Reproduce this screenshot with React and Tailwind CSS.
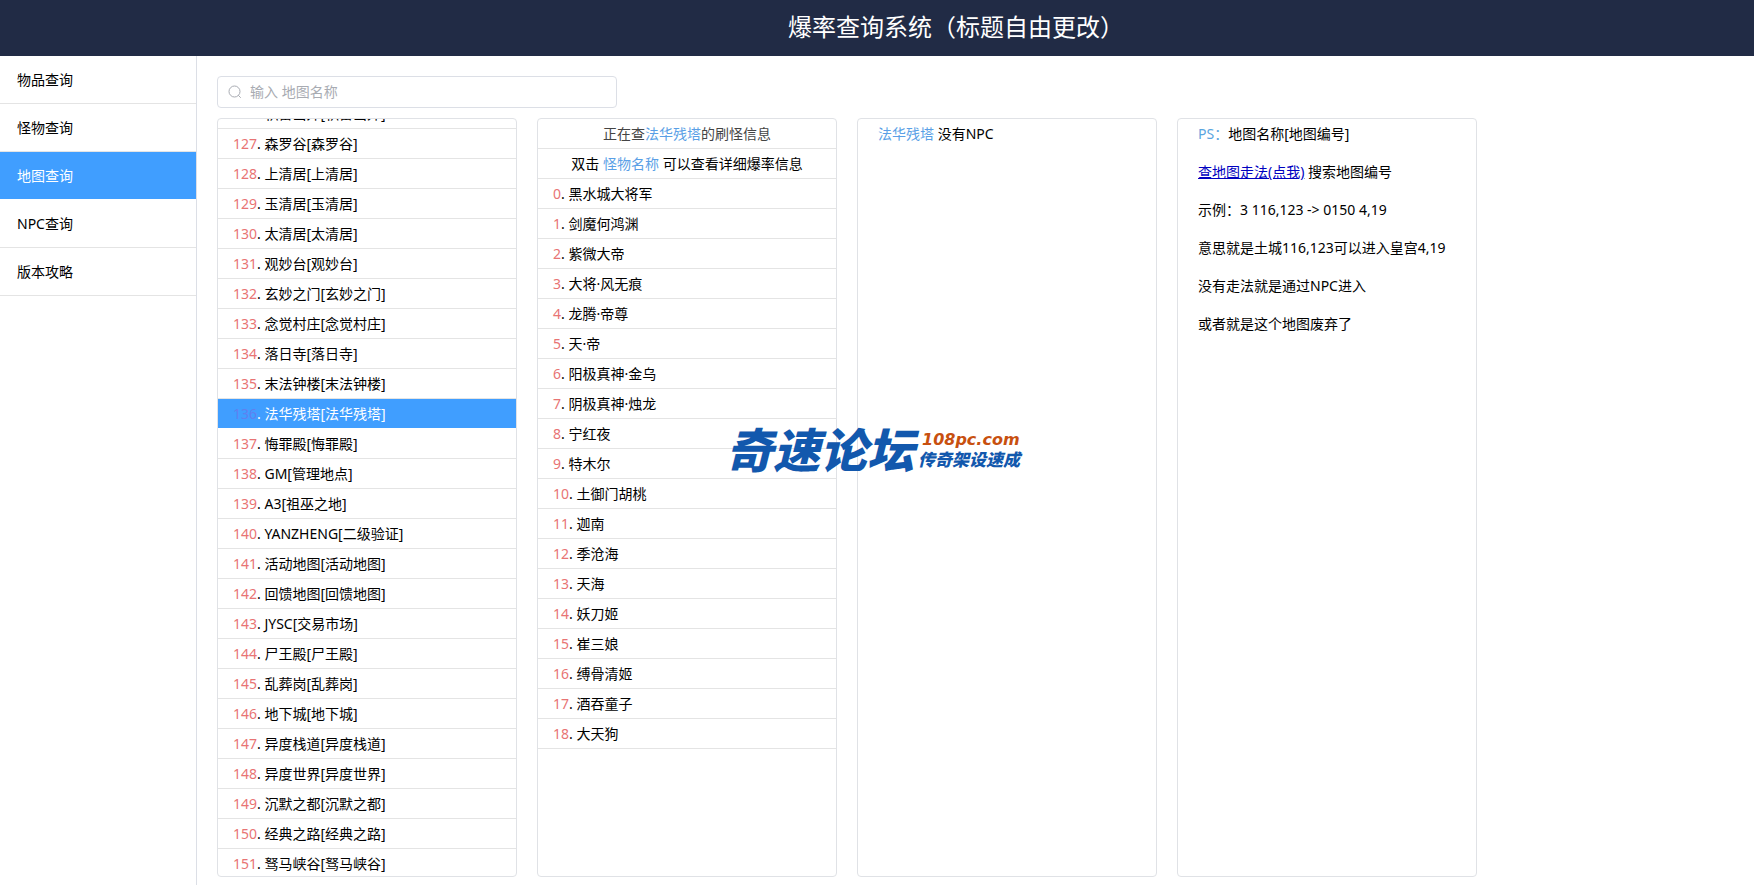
import React, { useLayoutEffect, useRef, useState } from 'react';

const menu = ['物品查询', '怪物查询', '地图查询', 'NPC查询', '版本攻略'];

const maps = [
  { id: 126, code: '积雷山外', name: '积雷山外' },
  { id: 127, code: '森罗谷', name: '森罗谷' },
  { id: 128, code: '上清居', name: '上清居' },
  { id: 129, code: '玉清居', name: '玉清居' },
  { id: 130, code: '太清居', name: '太清居' },
  { id: 131, code: '观妙台', name: '观妙台' },
  { id: 132, code: '玄妙之门', name: '玄妙之门' },
  { id: 133, code: '念觉村庄', name: '念觉村庄' },
  { id: 134, code: '落日寺', name: '落日寺' },
  { id: 135, code: '末法钟楼', name: '末法钟楼' },
  { id: 136, code: '法华残塔', name: '法华残塔' },
  { id: 137, code: '悔罪殿', name: '悔罪殿' },
  { id: 138, code: 'GM', name: '管理地点' },
  { id: 139, code: 'A3', name: '祖巫之地' },
  { id: 140, code: 'YANZHENG', name: '二级验证' },
  { id: 141, code: '活动地图', name: '活动地图' },
  { id: 142, code: '回馈地图', name: '回馈地图' },
  { id: 143, code: 'JYSC', name: '交易市场' },
  { id: 144, code: '尸王殿', name: '尸王殿' },
  { id: 145, code: '乱葬岗', name: '乱葬岗' },
  { id: 146, code: '地下城', name: '地下城' },
  { id: 147, code: '异度栈道', name: '异度栈道' },
  { id: 148, code: '异度世界', name: '异度世界' },
  { id: 149, code: '沉默之都', name: '沉默之都' },
  { id: 150, code: '经典之路', name: '经典之路' },
  { id: 151, code: '驽马峡谷', name: '驽马峡谷' },
];

const monsters = [
  '黑水城大将军', '剑魔何鸿渊', '紫微大帝', '大将·风无痕', '龙腾·帝尊', '天·帝',
  '阳极真神·金乌', '阴极真神·烛龙', '宁红夜', '特木尔', '土御门胡桃', '迦南',
  '季沧海', '天海', '妖刀姬', '崔三娘', '缚骨清姬', '酒吞童子', '大天狗',
];

const Sidebar = ({ active, onSelect }) => (
  <nav className="w-[197px] shrink-0 border-r border-[#dcdfe6]">
    {menu.map((item) => (
      <button
        key={item}
        onClick={() => onSelect(item)}
        className={`block h-12 w-full border-b px-[17px] text-left ${
          active === item ? 'border-white bg-[#409eff] text-white' : 'border-[#e4e4e4]'
        }`}
      >
        {item}
      </button>
    ))}
  </nav>
);

const SearchBox = ({ value, onChange }) => (
  <label className="flex h-8 w-[400px] items-center gap-2 rounded border border-[#dcdfe6] px-[10px]">
    <svg className="size-[14px] text-[#a8abb2]" viewBox="0 0 14 14" fill="none" stroke="currentColor">
      <circle cx="6.5" cy="6.5" r="5.5" />
      <path d="M10.5 10.5l2 2" strokeLinecap="round" />
    </svg>
    <input
      type="text"
      aria-label="地图名称"
      placeholder="输入 地图名称"
      value={value}
      onChange={(e) => onChange(e.target.value)}
      className="min-w-0 flex-1 outline-none placeholder:text-[#a8abb2]"
    />
  </label>
);

const MapList = ({ items, selected, onSelect }) => {
  const listRef = useRef(null);

  useLayoutEffect(() => {
    listRef.current.scrollTop = 20;
  }, []);

  return (
    <ul ref={listRef} className="w-[300px] overflow-y-auto rounded border border-[#e0e2e6] [scrollbar-width:none]">
      {items.map((m) => (
        <li key={m.id}>
          <button
            onClick={() => onSelect(m)}
            className={`block h-[30px] w-full border-b px-[15px] text-left ${
              selected.id === m.id ? 'border-white bg-[#409eff] text-white' : 'border-[#e4e4e4]'
            }`}
          >
            <span className={selected.id === m.id ? 'text-[#5f80f0]' : 'text-[#e87474]'}>{m.id}</span>
            . {m.code}[{m.name}]
          </button>
        </li>
      ))}
    </ul>
  );
};

const MonsterList = ({ map }) => (
  <section className="w-[300px] overflow-hidden rounded border border-[#e0e2e6] leading-[29px]">
    <h2 className="border-b border-[#e4e4e4] text-center text-[#444]">
      正在查<span className="text-[#5a9fe6]">{map.name}</span>的刷怪信息
    </h2>
    <p className="border-b border-[#e4e4e4] text-center">
      双击 <span className="text-[#5a9fe6]">怪物名称</span> 可以查看详细爆率信息
    </p>
    <ul>
      {monsters.map((name, i) => (
        <li key={name} className="border-b border-[#e4e4e4] px-[15px]">
          <span className="text-[#e87474]">{i}</span>. {name}
        </li>
      ))}
    </ul>
  </section>
);

const Notes = () => (
  <section className="w-[300px] space-y-2 rounded border border-[#e0e2e6] px-5 leading-[30px]">
    <p><span className="text-[#5aa5e0]">PS：</span>地图名称[地图编号]</p>
    <p><a href="#maps" className="text-[#0000c0] underline">查地图走法(点我)</a> 搜索地图编号</p>
    <p>示例：3 116,123 -&gt; 0150 4,19</p>
    <p>意思就是土城116,123可以进入皇宫4,19</p>
    <p>没有走法就是通过NPC进入</p>
    <p>或者就是这个地图废弃了</p>
  </section>
);

// Forum mark floating over the middle of the page
const Watermark = () => (
  <div className="pointer-events-none absolute top-[421px] left-[726px] flex items-center gap-1 font-black italic text-[#1258ad]">
    <span className="text-[47px] leading-[58px]">奇速论坛</span>
    <span className="flex flex-col">
      <span className="pl-1 font-['DejaVu_Sans'] text-base leading-5 font-bold text-[#c8500f]">108pc.com</span>
      <span className="text-[17px] leading-5">传奇架设速成</span>
    </span>
  </div>
);

const App = () => {
  const [active, setActive] = useState('地图查询');
  const [keyword, setKeyword] = useState('');
  const [selected, setSelected] = useState(maps[10]);

  const shown = maps.filter((m) => m.name.includes(keyword) || m.code.includes(keyword));

  return (
    <div className="relative flex h-screen flex-col bg-white font-['Noto_Sans','Noto_Sans_CJK_SC',sans-serif] text-sm text-black">
      <header className="flex h-14 shrink-0 items-center justify-center bg-[#212b45] pb-[2px] pl-[158px]">
        <h1 className="text-2xl text-white">爆率查询系统（标题自由更改）</h1>
      </header>
      <div className="flex min-h-0 flex-1">
        <Sidebar active={active} onSelect={setActive} />
        <main className="flex min-w-0 flex-1 flex-col gap-[10px] px-5 pt-5 pb-2">
          <SearchBox value={keyword} onChange={setKeyword} />
          <div className="flex min-h-0 flex-1 gap-5">
            <MapList items={shown} selected={selected} onSelect={setSelected} />
            <MonsterList map={selected} />
            <section className="w-[300px] rounded border border-[#e0e2e6] px-5 leading-[30px]">
              <span className="text-[#5a9fe6]">{selected.name}</span> 没有NPC
            </section>
            <Notes />
          </div>
        </main>
      </div>
      <Watermark />
    </div>
  );
};

export default App;
